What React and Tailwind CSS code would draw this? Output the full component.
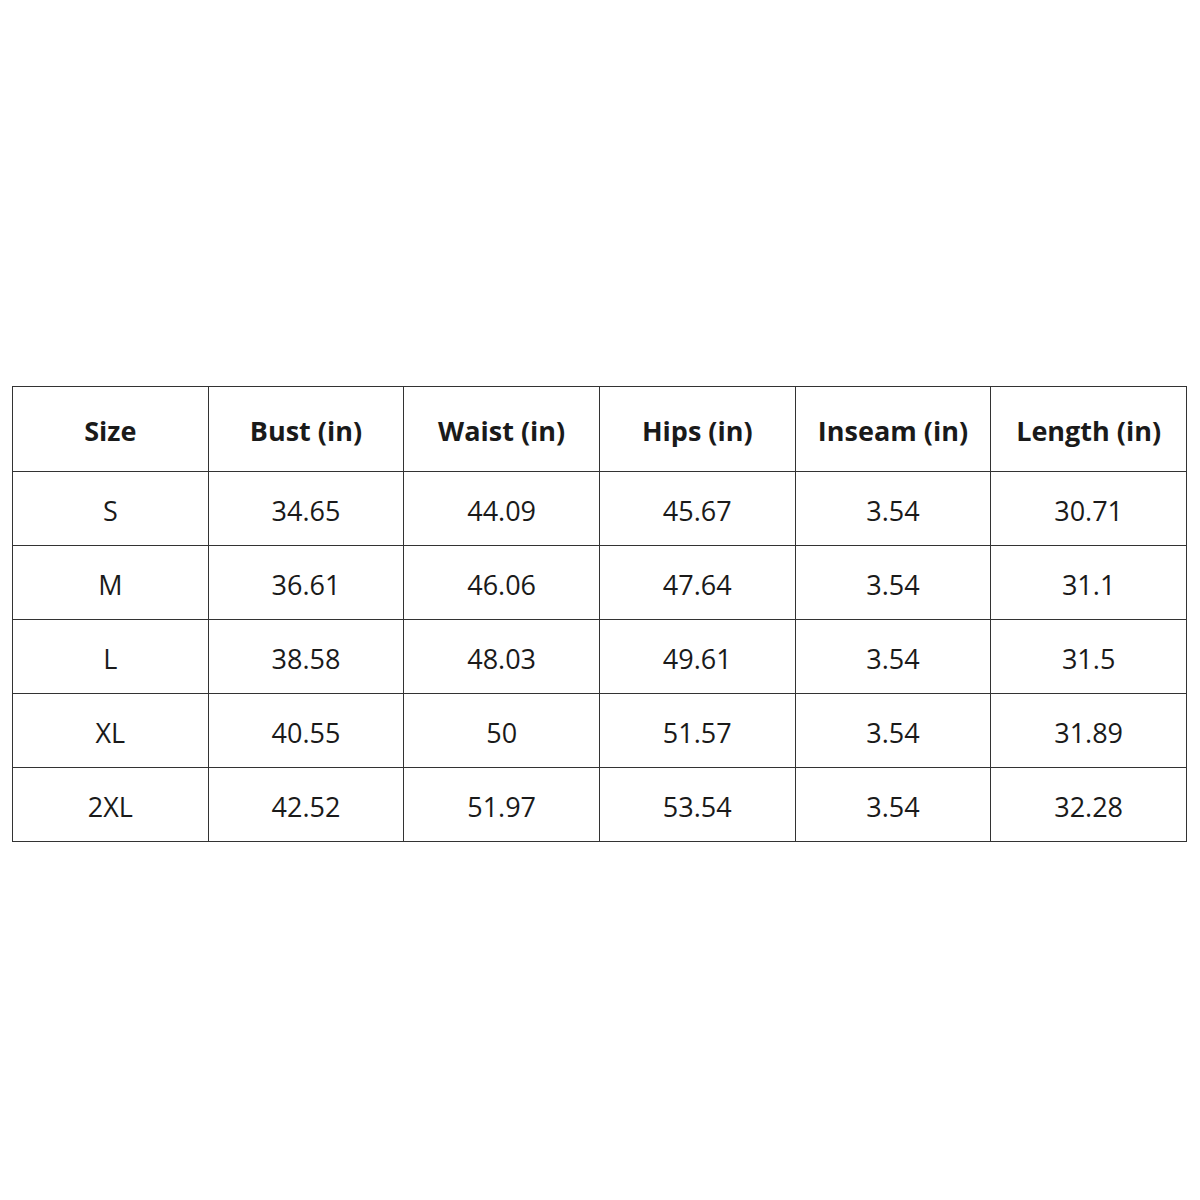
import React from 'react';

const headers = ['Size', 'Bust (in)', 'Waist (in)', 'Hips (in)', 'Inseam (in)', 'Length (in)'];

const rows = [
  ['S', '34.65', '44.09', '45.67', '3.54', '30.71'],
  ['M', '36.61', '46.06', '47.64', '3.54', '31.1'],
  ['L', '38.58', '48.03', '49.61', '3.54', '31.5'],
  ['XL', '40.55', '50', '51.57', '3.54', '31.89'],
  ['2XL', '42.52', '51.97', '53.54', '3.54', '32.28'],
];

export default function App() {
  return (
    <div
      className="w-[1200px] h-[1200px] bg-white pt-[386px] pl-[12px] text-[#1a1a1a]"
      style={{ fontFamily: '"Open Sans", "Liberation Sans", sans-serif' }}
    >
      <table className="w-[1175px] border-collapse table-fixed">
        <thead>
          <tr className="h-[85px]">
            {headers.map((h) => (
              <th key={h} className="border border-[#333] text-[27px] font-bold text-center align-middle pt-[5px]">
                {h}
              </th>
            ))}
          </tr>
        </thead>
        <tbody>
          {rows.map((r) => (
            <tr key={r[0]} className="h-[74px]">
              {r.map((c, i) => (
                <td key={i} className="border border-[#333] text-[27px] text-center align-middle pt-[5px]">
                  {c}
                </td>
              ))}
            </tr>
          ))}
        </tbody>
      </table>
    </div>
  );
}
